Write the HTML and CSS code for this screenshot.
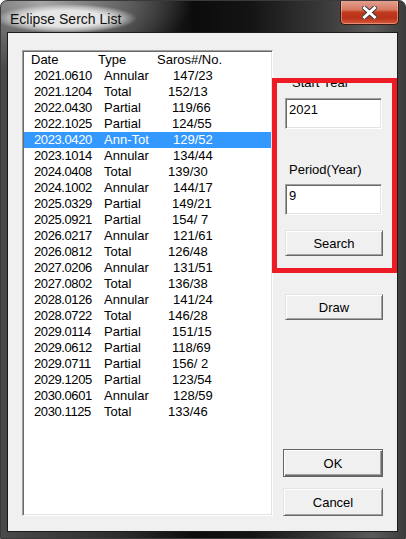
FILE: index.html
```html
<!DOCTYPE html>
<html>
<head>
<meta charset="utf-8">
<title>Eclipse Serch List</title>
<link rel="stylesheet" href="styles.css">
</head>
<body>
<div class="window">
  <div class="titlebar">
    <span class="title">Eclipse Serch List</span>
    <div class="close-btn">
      <svg width="15" height="13" viewBox="0 0 15 13">
        <path d="M2.5 2 L12.5 11 M12.5 2 L2.5 11" stroke="#3c3c3c" stroke-width="5" stroke-linecap="square" fill="none"/>
        <path d="M2.5 2 L12.5 11 M12.5 2 L2.5 11" stroke="#ffffff" stroke-width="3" stroke-linecap="square" fill="none"/>
      </svg>
    </div>
  </div>
  <div class="frame-body">
    <div class="client">
      <div class="listbox">
        <div class="row head"><span class="c1">Date</span><span class="c2">Type</span><span class="c3">Saros#/No.</span></div>
        <div class="row ann"><span class="d">2021.0610</span><span class="t">Annular</span><span class="s">147/23</span></div>
        <div class="row tot"><span class="d">2021.1204</span><span class="t">Total</span><span class="s">152/13</span></div>
        <div class="row par"><span class="d">2022.0430</span><span class="t">Partial</span><span class="s">119/66</span></div>
        <div class="row par"><span class="d">2022.1025</span><span class="t">Partial</span><span class="s">124/55</span></div>
        <div class="row ann selected"><span class="d">2023.0420</span><span class="t">Ann-Tot</span><span class="s">129/52</span></div>
        <div class="row ann"><span class="d">2023.1014</span><span class="t">Annular</span><span class="s">134/44</span></div>
        <div class="row tot"><span class="d">2024.0408</span><span class="t">Total</span><span class="s">139/30</span></div>
        <div class="row ann"><span class="d">2024.1002</span><span class="t">Annular</span><span class="s">144/17</span></div>
        <div class="row par"><span class="d">2025.0329</span><span class="t">Partial</span><span class="s">149/21</span></div>
        <div class="row par"><span class="d">2025.0921</span><span class="t">Partial</span><span class="s">154/ 7</span></div>
        <div class="row ann"><span class="d">2026.0217</span><span class="t">Annular</span><span class="s">121/61</span></div>
        <div class="row tot"><span class="d">2026.0812</span><span class="t">Total</span><span class="s">126/48</span></div>
        <div class="row ann"><span class="d">2027.0206</span><span class="t">Annular</span><span class="s">131/51</span></div>
        <div class="row tot"><span class="d">2027.0802</span><span class="t">Total</span><span class="s">136/38</span></div>
        <div class="row ann"><span class="d">2028.0126</span><span class="t">Annular</span><span class="s">141/24</span></div>
        <div class="row tot"><span class="d">2028.0722</span><span class="t">Total</span><span class="s">146/28</span></div>
        <div class="row par"><span class="d">2029.0114</span><span class="t">Partial</span><span class="s">151/15</span></div>
        <div class="row par"><span class="d">2029.0612</span><span class="t">Partial</span><span class="s">118/69</span></div>
        <div class="row par"><span class="d">2029.0711</span><span class="t">Partial</span><span class="s">156/ 2</span></div>
        <div class="row par"><span class="d">2029.1205</span><span class="t">Partial</span><span class="s">123/54</span></div>
        <div class="row ann"><span class="d">2030.0601</span><span class="t">Annular</span><span class="s">128/59</span></div>
        <div class="row tot"><span class="d">2030.1125</span><span class="t">Total</span><span class="s">133/46</span></div>
      </div>
      <div class="side">
        <div class="label label-start">Start Year</div>
        <div class="edit edit-start">2021</div>
        <div class="label label-period">Period(Year)</div>
        <div class="edit edit-period">9</div>
        <div class="btn btn-search">Search</div>
        <div class="btn btn-draw">Draw</div>
        <div class="btn btn-wide btn-ok">OK</div>
        <div class="btn btn-wide btn-cancel">Cancel</div>
      </div>
      <div class="highlight"></div>
    </div>
  </div>
</div>
</body>
</html>
```
FILE: styles.css
```css
html, body {
  margin: 0;
  padding: 0;
  background: #ffffff;
}

.window {
  width: 406px;
  height: 539px;
  box-sizing: border-box;
  display: flex;
  flex-direction: column;
  border-radius: 7px 7px 0 0;
  border: 1px solid #3a3a3a;
  overflow: hidden;
  background:
    radial-gradient(ellipse 150px 70px at 10% 0%, #a8a8a8 0%, #6e6e6e 45%, rgba(60,60,60,0) 100%),
    linear-gradient(90deg, #4a4a4a 0%, #2c2c2c 30%, #0c0c0c 48%, #141414 62%, #3a3a3a 80%, #5a5a5a 92%, #3c3c3c 100%);
  font-family: "Liberation Sans", Arial, sans-serif;
}

.titlebar {
  height: 32px;
  display: flex;
  align-items: flex-start;
  flex-shrink: 0;
}

.title {
  margin-top: 3px;
  margin-left: -5px;
  padding: 7px 16px 6px 14px;
  font-family: "Liberation Sans", Arial, sans-serif;
  font-size: 14px;
  color: #111;
  background: radial-gradient(ellipse closest-side, rgba(235,235,235,0.95) 55%, rgba(220,220,220,0.6) 80%, rgba(200,200,200,0) 100%);
}

.close-btn {
  margin-left: auto;
  margin-right: 6px;
  margin-top: -1px;
  width: 59px;
  height: 25px;
  box-sizing: border-box;
  border: 1px solid #3b1a12;
  border-top: none;
  border-radius: 0 0 5px 5px;
  box-shadow: inset 0 0 0 1px rgba(255,210,200,0.45);
  background: linear-gradient(180deg, #e4a595 0%, #d77a62 40%, #c0391c 52%, #b8321a 75%, #d8593a 100%);
  display: flex;
  align-items: center;
  justify-content: center;
}

.frame-body {
  flex: 1;
  display: flex;
  padding: 0 8px 7px 7px;
}

.client {
  position: relative;
  flex: 1;
  display: flex;
  background: #f0f0f0;
  padding-left: 14px;
  box-shadow: 0 0 0 1px #1a1a1a;
}

.listbox {
  margin-top: 17px;
  width: 251px;
  height: 466px;
  box-sizing: border-box;
  background: #ffffff;
  border-style: solid;
  border-width: 1px;
  border-color: #a0a0a0 #ffffff #ffffff #a0a0a0;
  box-shadow: inset 1px 1px 0 #696969, inset -1px -1px 0 #e3e3e3;
  padding: 1px 1px 0 1px;
  font-size: 13px;
  color: #000;
}

.row {
  display: flex;
  height: 16px;
  line-height: 16px;
  padding-left: 7px;
  white-space: pre;
}

.row.selected {
  background: #3399ff;
  color: #ffffff;
}

.head .c1 { width: 67px; }
.head .c2 { width: 59px; }

.row .d {
  width: 70px;
  padding-left: 3px;
  letter-spacing: -0.4px;
}

.row .t { width: 64px; }

.row.ann .s { margin-left: 5px; }
.row.par .s { margin-left: 4px; }
.row.tot .s { margin-left: 0; }

.side {
  margin-left: 10px;
  width: 100px;
  display: flex;
  flex-direction: column;
  font-size: 13px;
  color: #000;
}

.label {
  line-height: 15px;
  height: 15px;
  white-space: nowrap;
}

.label-start { margin-top: 42px; margin-left: 9px; }
.label-period { margin-top: 33px; margin-left: 6px; }

.edit {
  margin-left: 2px;
  width: 97px;
  height: 31px;
  box-sizing: border-box;
  background: #ffffff;
  border-style: solid;
  border-width: 1px;
  border-color: #a0a0a0 #ffffff #ffffff #a0a0a0;
  box-shadow: inset 1px 1px 0 #696969, inset -1px -1px 0 #e3e3e3;
  padding: 3px 0 0 3px;
  line-height: 16px;
}

.edit-start { margin-top: 8px; }
.edit-period { margin-top: 7px; }

.btn {
  margin-left: 2px;
  width: 98px;
  height: 26px;
  box-sizing: border-box;
  background: #f0f0f0;
  border-style: solid;
  border-width: 1px;
  border-color: #e3e3e3 #696969 #696969 #e3e3e3;
  box-shadow: inset 1px 1px 0 #ffffff, inset -1px -1px 0 #a0a0a0;
  display: flex;
  align-items: center;
  justify-content: center;
  padding-top: 1px;
}

.btn-search { margin-top: 15px; }
.btn-draw { margin-top: 38px; }

.btn-wide {
  margin-left: 0;
  width: 100px;
  height: 28px;
}

.btn-ok {
  margin-top: 129px;
  border: 1px solid #646464;
  box-shadow: inset 1px 1px 0 #ffffff, inset -1px -1px 0 #696969, inset -2px -2px 0 #a0a0a0;
}

.btn-cancel { margin-top: 11px; }

.highlight {
  position: absolute;
  left: 264px;
  top: 45px;
  width: 125px;
  height: 195px;
  box-sizing: border-box;
  border: 5px solid #ed1c24;
}
```
